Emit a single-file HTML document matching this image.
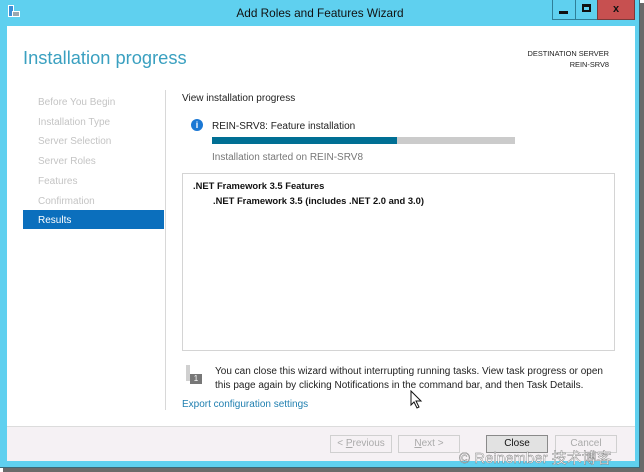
<!DOCTYPE html>
<html><head><meta charset="utf-8"><style>
*{margin:0;padding:0;box-sizing:border-box}
body{width:644px;height:472px;background:#fff;position:relative;overflow:hidden;font-family:"Liberation Sans","Noto Sans CJK SC",sans-serif;}
.abs{position:absolute}
.t{font-size:10px;white-space:nowrap}
</style></head><body>
<div class="abs" style="left:3px;top:3px;width:641px;height:469px;background:#6a6a6a"></div>
<div class="abs" style="left:0;top:0;width:640px;height:468px;background:#5fd0ef;border:1px solid #3a6a7a;border-top:none;border-left:none"></div>
<div class="abs" style="left:8px;top:5px;width:6px;height:12px;background:#3d8fd6;border:1px solid #fff"></div>
<div class="abs" style="left:12px;top:11px;width:8px;height:6px;background:#9aa7b0;border:1px solid #fff"></div>
<div class="abs" style="left:0;width:640px;top:6px;text-align:center;font-size:11.8px;color:#111;white-space:nowrap">Add Roles and Features Wizard</div>
<div class="abs" style="left:552px;top:0;width:24px;height:20px;border:1px solid #2f7f98;border-top:none"></div>
<div class="abs" style="left:559px;top:11px;width:9px;height:3px;background:#111"></div>
<div class="abs" style="left:575px;top:0;width:23px;height:20px;border:1px solid #2f7f98;border-top:none"></div>
<div class="abs" style="left:582px;top:4px;width:9px;height:8px;border:2px solid #111;border-top-width:3px"></div>
<div class="abs" style="left:597px;top:0;width:38px;height:20px;background:#c75050;border:1px solid #7a3a3a;border-top:none"></div>
<div class="abs" style="left:597px;top:3px;width:38px;text-align:center;font-size:11px;font-weight:bold;color:#111">x</div>
<div class="abs" style="left:7px;top:26px;width:628px;height:435px;background:#fff"></div>
<div class="abs" style="left:7px;top:426px;width:628px;height:35px;background:#f5f1f4;border-top:1px solid #dcdcdc"></div>
<div class="abs" style="left:23px;top:47px;font-size:18.3px;color:#3aa0c0;white-space:nowrap">Installation progress</div>
<div class="abs" style="right:35px;top:48px;font-size:7.4px;color:#222;text-align:right;line-height:11px;white-space:nowrap">DESTINATION SERVER<br>REIN-SRV8</div>
<div class="abs" style="left:165px;top:90px;width:1px;height:320px;background:#d8d8d8"></div>
<div class="abs t" style="left:38px;top:97px;color:#c4c4c4">Before You Begin</div>
<div class="abs t" style="left:38px;top:117px;color:#c4c4c4">Installation Type</div>
<div class="abs t" style="left:38px;top:136px;color:#c4c4c4">Server Selection</div>
<div class="abs t" style="left:38px;top:156px;color:#c4c4c4">Server Roles</div>
<div class="abs t" style="left:38px;top:176px;color:#c4c4c4">Features</div>
<div class="abs t" style="left:38px;top:196px;color:#c4c4c4">Confirmation</div>
<div class="abs" style="left:23px;top:210px;width:141px;height:19px;background:#0b6fbd"></div>
<div class="abs t" style="left:38px;top:215px;color:#fff">Results</div>
<div class="abs t" style="left:182px;top:93px;color:#222">View installation progress</div>
<div class="abs" style="left:191px;top:119px;width:12px;height:12px;border-radius:50%;background:#1b78d4;color:#fff;font-size:9px;font-weight:bold;text-align:center;line-height:12px">i</div>
<div class="abs t" style="left:212px;top:121px;color:#222">REIN-SRV8: Feature installation</div>
<div class="abs" style="left:212px;top:137px;width:303px;height:7px;background:#cbcbcb"></div>
<div class="abs" style="left:212px;top:137px;width:185px;height:7px;background:#006f94"></div>
<div class="abs t" style="left:212px;top:152px;color:#777">Installation started on REIN-SRV8</div>
<div class="abs" style="left:182px;top:173px;width:433px;height:178px;border:1px solid #d4d4d4"></div>
<div class="abs t" style="left:193px;top:180px;color:#111;font-weight:bold;font-size:9.4px">.NET Framework 3.5 Features</div>
<div class="abs t" style="left:213px;top:195px;color:#111;font-weight:bold;font-size:9.4px">.NET Framework 3.5 (includes .NET 2.0 and 3.0)</div>
<div class="abs" style="left:186px;top:365px;width:4px;height:16px;background:#d0d0d0"></div>
<div class="abs" style="left:190px;top:374px;width:12px;height:10px;background:#777;color:#fff;font-size:8px;text-align:center;line-height:10px">1</div>
<div class="abs t" style="left:215px;top:365px;color:#222;line-height:14px">You can close this wizard without interrupting running tasks. View task progress or open<br>this page again by clicking Notifications in the command bar, and then Task Details.</div>
<div class="abs t" style="left:182px;top:399px;color:#1f7fb0">Export configuration settings</div>
<svg class="abs" style="left:410px;top:390px" width="14" height="20"><path d="M1 1 L1 15 L4 12 L7 18 L9 17 L6 11 L11 11 Z" fill="#fff" stroke="#111" stroke-width="1"/></svg>
<div class="abs t" style="left:330px;top:435px;width:62px;height:18px;border:1px solid #d0d0d0;color:#aaa;text-align:center;line-height:16px">&lt; <u>P</u>revious</div>
<div class="abs t" style="left:398px;top:435px;width:62px;height:18px;border:1px solid #d0d0d0;color:#aaa;text-align:center;line-height:16px"><u>N</u>ext &gt;</div>
<div class="abs t" style="left:486px;top:435px;width:62px;height:18px;border:1px solid #8a8a8a;background:#e2e2e2;color:#111;text-align:center;line-height:16px">Close</div>
<div class="abs t" style="left:555px;top:435px;width:62px;height:18px;border:1px solid #d0d0d0;color:#aaa;text-align:center;line-height:16px">Cancel</div>
<div class="abs" style="left:459px;top:447px;font-size:15px;color:#fff;-webkit-text-stroke:0.4px #777;white-space:nowrap">© Reinember 技术博客</div>
</body></html>
